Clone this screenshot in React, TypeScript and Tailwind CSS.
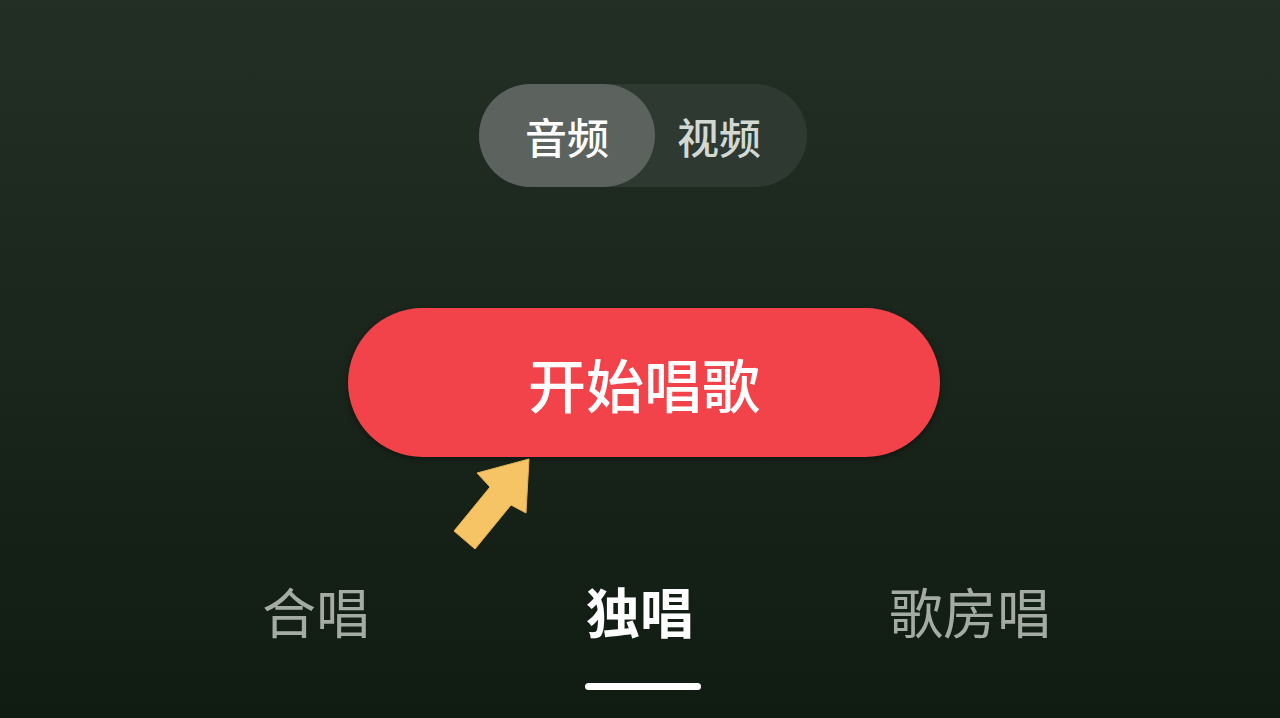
import React from "react";

const FONT = '"Noto Sans CJK SC", "Noto Sans", sans-serif';

function PointerArrow() {
  // yellow annotation arrow pointing at the button
  return (
    <svg
      className="absolute left-[448px] top-[454px]"
      width="90"
      height="100"
      viewBox="448 454 90 100"
    >
      <polygon
        points="529,459 477,473 490,487 454,531 475,549 511,505 526,513"
        fill="#f6c465"
        stroke="#e8b050"
        strokeWidth="1"
        strokeLinejoin="round"
      />
    </svg>
  );
}

export default function App() {
  return (
    <div
      className="relative w-[1280px] h-[718px] overflow-hidden bg-gradient-to-b from-[#232e25] via-[#1a251b] to-[#101b11]"
      style={{ fontFamily: FONT }}
    >
      <div className="flex flex-col items-center pt-[84px]">
        {/* audio / video toggle */}
        <div className="ml-[6px] flex h-[103px] items-center rounded-full bg-[#2e3932]">
          <button className="h-full rounded-full bg-[#5c625d] px-[46px] text-[42px] font-medium leading-none text-white">
            音频
          </button>
          <button className="h-full pl-[22px] pr-[46px] text-[42px] font-medium leading-none text-[#d3d8d3]">
            视频
          </button>
        </div>

        {/* start button */}
        <button className="ml-[8px] mt-[121px] flex h-[149px] w-[592px] items-center justify-center rounded-full bg-[#f3434a] text-[58px] font-medium leading-none text-white shadow-[0_2px_6px_rgba(0,0,0,0.35)]">
          开始唱歌
        </button>

        {/* mode tabs */}
        <div className="mt-[127px] grid w-[975px] grid-cols-3 text-center text-[54px] leading-none">
          <span className="ml-[2px] text-[#a3aba3]">合唱</span>
          <span className="font-bold text-white">独唱</span>
          <span className="ml-[10px] text-[#a3aba3]">歌房唱</span>
        </div>
        <div className="ml-[6px] mt-[45px] h-[7px] w-[116px] rounded-full bg-white" />
      </div>

      <PointerArrow />
    </div>
  );
}
